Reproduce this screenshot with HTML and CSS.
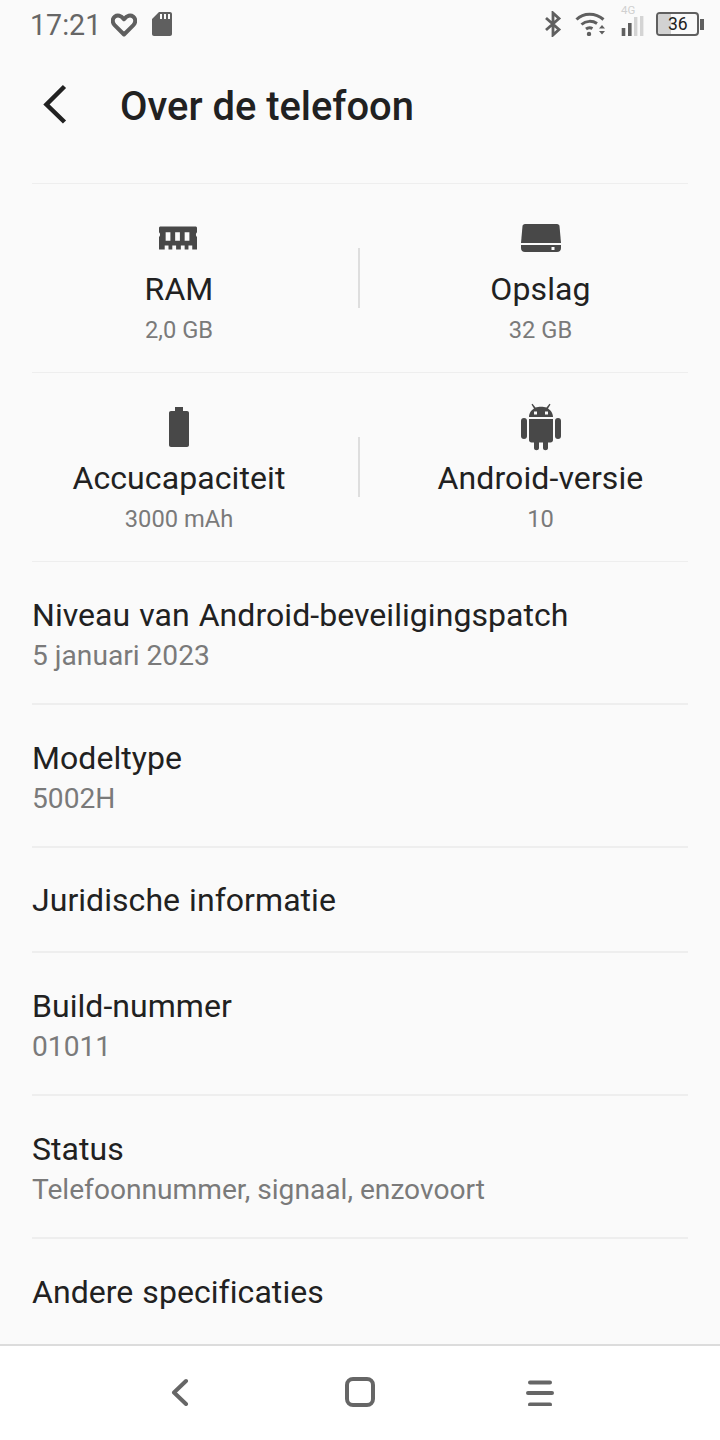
FILE: index.html
```html
<!DOCTYPE html>
<html>
<head>
    <meta charset="utf-8">
    <title>Over de telefoon</title>
    <link rel="stylesheet" href="styles.css">
</head>

<body>
<div class="statusbar">
    <span class="time">17:21</span>
    <svg class="st-heart" width="26" height="24" viewBox="0 0 26 24"><path d="M13 21.500 3.600 12.200C1 9.500 1.200 5.600 3.800 3.600 6.400 1.700 10 2.300 13 6.200 16 2.300 19.600 1.700 22.200 3.600 24.800 5.600 25 9.500 22.400 12.200Z" fill="none" stroke="#5f5f5f" stroke-width="4" stroke-linejoin="round"/></svg>
    <svg class="st-sd" width="20" height="24" viewBox="0 0 20 24"><path fill-rule="evenodd" d="M7 0H18C19.100 0 20 .9 20 2V22C20 23.100 19.100 24 18 24H2C.9 24 0 23.100 0 22V7ZM8 2V7H10V2ZM12 2V7H14V2ZM16 2V7H18V2Z" fill="#5f5f5f"/></svg>
    <span class="st-space"></span>
    <svg class="st-bt" width="18" height="26" viewBox="0 0 18 26"><path d="M2 7 15 18.500 9 24V2L15 7.500 2 19" fill="none" stroke="#5f5f5f" stroke-width="2.800"/></svg>
    <svg class="st-wifi" width="31" height="26" viewBox="0 0 31 26">
        <path d="M1.500 9.500C8.500 2.500 20.500 2.500 28.500 9.500" fill="none" stroke="#5f5f5f" stroke-width="3"/>
        <path d="M6.500 14.500C11 10.500 17.500 10.500 22 13.500" fill="none" stroke="#5f5f5f" stroke-width="3"/>
        <path d="M11 19C13 17.500 15.500 17.500 17.500 18.500" fill="none" stroke="#5f5f5f" stroke-width="3"/>
        <circle cx="14" cy="24" r="2.200" fill="#5f5f5f"/>
        <path d="M24 18.500 27 15 30 18.500ZM24 21 27 24.500 30 21Z" fill="#5f5f5f"/>
    </svg>
    <div class="st-signal">
        <span class="st-4g">4G</span>
        <svg width="24" height="21" viewBox="0 0 24 21">
            <rect x="0.700" y="13" width="3.600" height="8" fill="#5f5f5f"/>
            <rect x="7" y="8" width="3.600" height="13" fill="#5f5f5f"/>
            <rect x="13" y="2" width="3.400" height="19" fill="#d4d4d4"/>
            <rect x="19" y="1" width="3.400" height="20" fill="#d4d4d4"/>
        </svg>
    </div>
    <div class="st-battery">
        <div class="st-battery-box">
            <div class="st-battery-fill"></div>
            <span class="st-battery-num">36</span>
        </div>
        <div class="st-battery-nub"></div>
    </div>
</div>

<div class="header">
    <svg class="back" width="28" height="42" viewBox="0 0 28 42"><path d="M23.500 2.500 5.500 20.500 23.500 38" fill="none" stroke="#212121" stroke-width="4.500"/></svg>
    <h1>Over de telefoon</h1>
</div>

<div class="content">
    <div class="specs">
        <div class="spec">
            <div class="spec-icon icon-ram">
                <svg width="38" height="24" viewBox="0 0 40 24"><path fill-rule="evenodd" d="M1 0H39L40 1V6C38.500 7 38.500 10 40 11V24H35V20H31V24H27V20H23V24H18V20H14V24H10V20H6V24H0V11C1.500 10 1.500 7 0 6V1ZM7 6V15H12V6ZM17 6V15H22V6ZM27 6V15H32V6Z" fill="#484848"/></svg>
            </div>
            <div class="spec-label">RAM</div>
            <div class="spec-value">2,0 GB</div>
        </div>
        <div class="spec-line"></div>
        <div class="spec">
            <div class="spec-icon">
                <svg width="40" height="28" viewBox="0 0 40 28"><path d="M4 0H36C37.500 0 38.300 1 38.500 2L40 19H0L1.500 2C1.700 1 2.500 0 4 0Z" fill="#484848"/><path fill-rule="evenodd" d="M0 21H40V24C40 26.500 38.500 28 36 28H4C1.500 28 0 26.500 0 24ZM30.500 23V26H33.500V23Z" fill="#484848"/></svg>
            </div>
            <div class="spec-label">Opslag</div>
            <div class="spec-value">32 GB</div>
        </div>
    </div>
    <div class="specs">
        <div class="spec">
            <div class="spec-icon">
                <svg width="20" height="40" viewBox="0 0 20 40"><path d="M6 0H14V4H18C19.200 4 20 4.800 20 6V38C20 39.200 19.200 40 18 40H2C.8 40 0 39.200 0 38V6C0 4.800 .8 4 2 4H6Z" fill="#484848"/></svg>
            </div>
            <div class="spec-label">Accucapaciteit</div>
            <div class="spec-value">3000 mAh</div>
        </div>
        <div class="spec-line"></div>
        <div class="spec">
            <div class="spec-icon">
                <svg width="40" height="48" viewBox="0 0 40 48">
                    <path fill-rule="evenodd" d="M8 14C8 10 10.500 7 13 5.500L10.500 1.500 11.500 .8 14.500 4.600C17.500 3.500 22.500 3.500 25.500 4.600L28.500 .8 29.500 1.500 27 5.500C29.500 7 32 10 32 14ZM13 8.500V11.500H16V8.500ZM24 8.500V11.500H27V8.500Z" fill="#484848"/>
                    <path d="M8 16H32V37C32 38.500 31 39.500 29.500 39.500H27V45C27 48 22 48 22 45V39.500H18V45C18 48 13 48 13 45V39.500H10.500C9 39.500 8 38.500 8 37Z" fill="#484848"/>
                    <rect x="0" y="15" width="6" height="21" rx="3" fill="#484848"/>
                    <rect x="34" y="15" width="6" height="21" rx="3" fill="#484848"/>
                </svg>
            </div>
            <div class="spec-label">Android-versie</div>
            <div class="spec-value">10</div>
        </div>
    </div>

    <div class="row">
        <div class="row-title">Niveau van Android-beveiligingspatch</div>
        <div class="row-sub">5 januari 2023</div>
    </div>
    <div class="row">
        <div class="row-title">Modeltype</div>
        <div class="row-sub">5002H</div>
    </div>
    <div class="row single">
        <div class="row-title">Juridische informatie</div>
    </div>
    <div class="row">
        <div class="row-title">Build-nummer</div>
        <div class="row-sub">01011</div>
    </div>
    <div class="row">
        <div class="row-title">Status</div>
        <div class="row-sub">Telefoonnummer, signaal, enzovoort</div>
    </div>
    <div class="row single last">
        <div class="row-title">Andere specificaties</div>
    </div>
</div>

<div class="navbar">
    <svg width="18" height="28" viewBox="0 0 18 28"><path d="M15 3 3 14.500 15 26" fill="none" stroke="#666" stroke-width="4" stroke-linecap="round" stroke-linejoin="round"/></svg>
    <svg width="30" height="30" viewBox="0 0 30 30"><rect x="2" y="2" width="26" height="26" rx="6" fill="none" stroke="#666" stroke-width="4"/></svg>
    <svg width="28" height="28" viewBox="0 0 28 28"><path d="M4 4.500H24M2 15H26M4 26.500H24" fill="none" stroke="#666" stroke-width="4" stroke-linecap="round"/></svg>
</div>
</body>

</html>
```

FILE: styles.css
```css
html, body {
    margin: 0;
    padding: 0;
}

body {
    width: 720px;
    height: 1440px;
    overflow: hidden;
    display: flex;
    flex-direction: column;
    background-color: #fafafa;
    color: #212121;
    font-family: Roboto, sans-serif;
}

.statusbar {
    height: 50px;
    display: flex;
    align-items: flex-start;
    padding: 0 16px 0 30px;
    color: #666;
}

.time {
    font-size: 28.6px;
    line-height: 50px;
    width: 81px;
}

.st-heart {
    margin-top: 13px;
    margin-right: 15px;
}

.st-sd {
    margin-top: 12px;
}

.st-space {
    flex: 1;
}

.st-bt {
    margin-top: 11px;
    margin-right: 13px;
}

.st-wifi {
    margin-top: 10px;
    margin-right: 15px;
}

.st-signal {
    width: 24px;
    margin-right: 11px;
    position: relative;
    padding-top: 15px;
}

.st-signal svg {
    display: block;
}

.st-4g {
    position: absolute;
    left: 0;
    top: 4px;
    font-size: 11.5px;
    line-height: 12px;
    color: #d0d0d0;
}

.st-battery {
    display: flex;
    align-items: center;
    margin-top: 12px;
}

.st-battery-box {
    position: relative;
    width: 39px;
    height: 20px;
    border: 2px solid #5f5f5f;
    border-radius: 4px;
    overflow: hidden;
}

.st-battery-fill {
    width: 13px;
    height: 100%;
    background-color: #d2d2d2;
}

.st-battery-num {
    position: absolute;
    left: 10px;
    top: 0;
    font-size: 17.5px;
    line-height: 20px;
    color: #212121;
}

.st-battery-nub {
    width: 4px;
    height: 11px;
    margin-left: 1px;
    background-color: #5f5f5f;
}

.header {
    height: 133px;
    display: flex;
    align-items: flex-start;
    padding-left: 41px;
}

.back {
    margin-top: 34px;
    margin-right: 51px;
}

h1 {
    margin: 0;
    font-size: 39.9px;
    font-weight: 500;
    line-height: 114px;
}

.content {
    flex: 1;
    margin: 0 32px;
    border-top: 1px solid #eeeeee;
}

.specs {
    display: grid;
    grid-template-columns: 358px 2px 360px;
    height: 188px;
    padding-bottom: 1px;
    margin: 0 -32px;
    position: relative;
}

.specs::after {
    content: "";
    position: absolute;
    left: 32px;
    right: 32px;
    bottom: 0;
    border-bottom: 1px solid #eeeeee;
}

.spec {
    text-align: center;
    padding-top: 30px;
}

.spec-line + .spec {
    padding-left: 1px;
}

.spec-icon {
    height: 48px;
    display: flex;
    align-items: center;
    justify-content: center;
    margin-bottom: 7px;
}

.spec-line + .spec .spec-icon {
    padding-left: 1px;
}

.spec-icon svg {
    display: block;
}

.icon-ram {
    padding-right: 2px;
}

.spec-label {
    font-size: 32px;
    letter-spacing: .1px;
    line-height: 40px;
}

.spec-value {
    font-size: 23.7px;
    line-height: 36px;
    margin-top: 3px;
    color: #7a7a7a;
}

.spec-line {
    width: 2px;
    height: 60px;
    margin-top: 64px;
    background-color: #dedede;
}

.row {
    padding-top: 34px;
    box-sizing: border-box;
    height: 143px;
    border-bottom: 2px solid #eeeeee;
}

.row.single {
    height: 105px;
    padding-top: 33px;
}

.row.last {
    border-bottom: none;
    padding-top: 34px;
}

.row-title {
    font-size: 32px;
    letter-spacing: .05px;
    word-spacing: 1px;
    line-height: 38px;
    margin-bottom: 1px;
}

.row-sub {
    font-size: 28.15px;
    line-height: 42px;
    color: #7a7a7a;
}

.navbar {
    height: 96px;
    box-sizing: border-box;
    display: grid;
    grid-template-columns: repeat(3, 180px);
    justify-items: center;
    align-items: center;
    padding: 0 90px 2px;
    background-color: #ffffff;
    border-top: 2px solid #dcdcdc;
}
```
